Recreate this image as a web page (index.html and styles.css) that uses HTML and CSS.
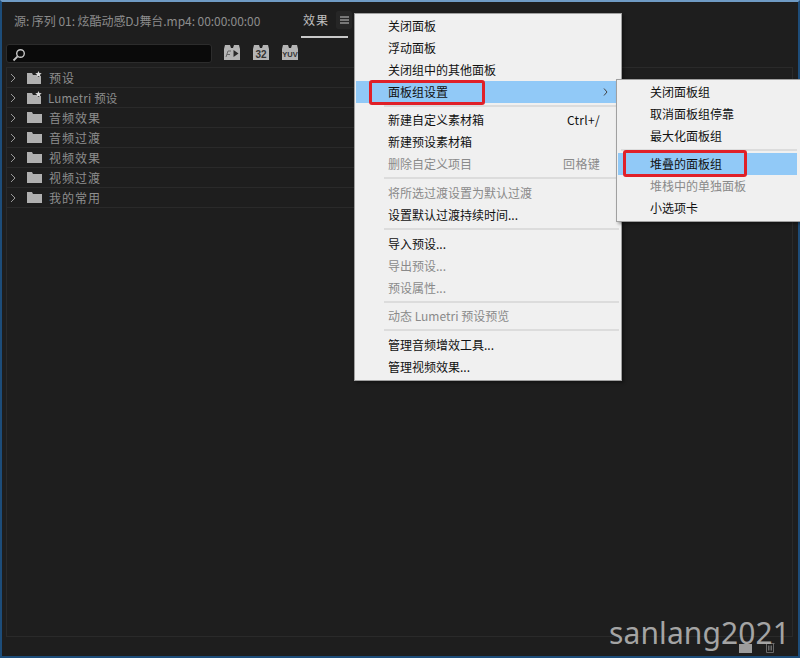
FILE: index.html
```html
<!DOCTYPE html>
<html lang="zh-CN">
<head>
  <meta charset="UTF-8">
  <title>效果面板菜单</title>
  <link rel="stylesheet" href="styles.css">
</head>
<body>
  <div class="window">
    <!-- 顶部标题 -->
    <div class="header">
      <span class="source-title">源: 序列 01: 炫酷动感DJ舞台.mp4: 00:00:00:00</span>
      <span class="tab">效果</span>
      <span class="tab-menu">
        <svg width="9" height="8" viewBox="0 0 9 8"><path d="M0 1h9M0 4h9M0 7h9" stroke="#c8c8c8" stroke-width="1"/></svg>
      </span>
    </div>

    <!-- 搜索栏 -->
    <div class="toolbar">
      <div class="search">
        <svg width="14" height="14" viewBox="0 0 14 14"><circle cx="8.500" cy="5.500" r="3.800" fill="none" stroke="#c4c4c4" stroke-width="1.400"/><path d="M5.600 8.400 1.500 12.500" stroke="#c4c4c4" stroke-width="1.800"/></svg>
      </div>
      <div class="filters">
        <svg width="16" height="15" viewBox="0 0 16 15"><path d="M0 4 1 0h5l1 3h2l1-3h5l1 4v11H0z" fill="#b4b4b4"/><path d="M9.500 5v7l5-3.500z" fill="#2a2a2a"/><path d="M2 12l2-6h3M3 9.500h3" fill="none" stroke="#666" stroke-width="1"/></svg>
        <svg width="16" height="15" viewBox="0 0 16 15"><path d="M0 4 1 0h5l1 3h2l1-3h5l1 4v11H0z" fill="#b4b4b4"/><text x="8" y="12.500" class="filter-num">32</text></svg>
        <svg width="16" height="15" viewBox="0 0 16 15"><path d="M0 4 1 0h5l1 3h2l1-3h5l1 4v11H0z" fill="#b4b4b4"/><text x="8" y="12" class="filter-yuv">YUV</text></svg>
      </div>
    </div>

    <!-- 效果列表 -->
    <div class="tree">
      <div class="tree-row">
        <svg class="chevron" width="6" height="10" viewBox="0 0 6 10"><path d="M1 1l4 4-4 4" fill="none" stroke="#9a9a9a" stroke-width="1"/></svg>
        <svg class="folder" width="15" height="13" viewBox="0 0 15 13"><path d="M0 2h5l1 2h3.500l1.500 2 3-1v8H0z" fill="#b0b0b0"/><path d="M11.500 0l.9 2.100 2.300.2-1.700 1.500.5 2.300-2-1.200-2 1.200.5-2.300-1.700-1.500 2.300-.2z" fill="#d8d8d8"/></svg>
        <span>预设</span>
      </div>
      <div class="tree-row">
        <svg class="chevron" width="6" height="10" viewBox="0 0 6 10"><path d="M1 1l4 4-4 4" fill="none" stroke="#9a9a9a" stroke-width="1"/></svg>
        <svg class="folder" width="15" height="13" viewBox="0 0 15 13"><path d="M0 2h5l1 2h3.500l1.500 2 3-1v8H0z" fill="#b0b0b0"/><path d="M11.500 0l.9 2.100 2.300.2-1.700 1.500.5 2.300-2-1.200-2 1.200.5-2.300-1.700-1.500 2.300-.2z" fill="#d8d8d8"/></svg>
        <span class="row-tight">Lumetri 预设</span>
      </div>
      <div class="tree-row">
        <svg class="chevron" width="6" height="10" viewBox="0 0 6 10"><path d="M1 1l4 4-4 4" fill="none" stroke="#9a9a9a" stroke-width="1"/></svg>
        <svg class="folder" width="15" height="13" viewBox="0 0 15 13"><path d="M0 1h5l1 2h9v9H0z" fill="#b0b0b0"/></svg>
        <span>音频效果</span>
      </div>
      <div class="tree-row">
        <svg class="chevron" width="6" height="10" viewBox="0 0 6 10"><path d="M1 1l4 4-4 4" fill="none" stroke="#9a9a9a" stroke-width="1"/></svg>
        <svg class="folder" width="15" height="13" viewBox="0 0 15 13"><path d="M0 1h5l1 2h9v9H0z" fill="#b0b0b0"/></svg>
        <span>音频过渡</span>
      </div>
      <div class="tree-row">
        <svg class="chevron" width="6" height="10" viewBox="0 0 6 10"><path d="M1 1l4 4-4 4" fill="none" stroke="#9a9a9a" stroke-width="1"/></svg>
        <svg class="folder" width="15" height="13" viewBox="0 0 15 13"><path d="M0 1h5l1 2h9v9H0z" fill="#b0b0b0"/></svg>
        <span>视频效果</span>
      </div>
      <div class="tree-row">
        <svg class="chevron" width="6" height="10" viewBox="0 0 6 10"><path d="M1 1l4 4-4 4" fill="none" stroke="#9a9a9a" stroke-width="1"/></svg>
        <svg class="folder" width="15" height="13" viewBox="0 0 15 13"><path d="M0 1h5l1 2h9v9H0z" fill="#b0b0b0"/></svg>
        <span>视频过渡</span>
      </div>
      <div class="tree-row">
        <svg class="chevron" width="6" height="10" viewBox="0 0 6 10"><path d="M1 1l4 4-4 4" fill="none" stroke="#9a9a9a" stroke-width="1"/></svg>
        <svg class="folder" width="15" height="13" viewBox="0 0 15 13"><path d="M0 1h5l1 2h9v9H0z" fill="#b0b0b0"/></svg>
        <span>我的常用</span>
      </div>
    </div>

    <!-- 底部按钮 -->
    <div class="footer">
      <span class="footer-new"></span>
      <svg width="10" height="11" viewBox="0 0 10 11"><path d="M.5 1.500h9M1.500 1.500v9h7v-9M3.500 3.500v5M5 3.500v5M6.500 3.500v5" fill="none" stroke="#6a6a6a" stroke-width="1"/></svg>
    </div>
  </div>

  <!-- 右键菜单 -->
  <div class="menu">
    <div class="menu-item">关闭面板</div>
    <div class="menu-item">浮动面板</div>
    <div class="menu-item">关闭组中的其他面板</div>
    <div class="menu-item active">面板组设置
      <svg class="arrow" width="5" height="8" viewBox="0 0 5 8"><path d="M1 .5l3 3.500-3 3.500" fill="none" stroke="#444" stroke-width="1"/></svg>
      <span class="mark mark-main"></span>
    </div>
    <div class="menu-sep menu-sep-narrow"></div>
    <div class="menu-item">新建自定义素材箱<span class="shortcut">Ctrl+/</span></div>
    <div class="menu-item">新建预设素材箱</div>
    <div class="menu-item disabled">删除自定义项目<span class="shortcut">回格键</span></div>
    <div class="menu-sep"></div>
    <div class="menu-item disabled">将所选过渡设置为默认过渡</div>
    <div class="menu-item">设置默认过渡持续时间...</div>
    <div class="menu-sep"></div>
    <div class="menu-item">导入预设...</div>
    <div class="menu-item disabled">导出预设...</div>
    <div class="menu-item disabled">预设属性...</div>
    <div class="menu-sep menu-sep-narrow"></div>
    <div class="menu-item disabled">动态 Lumetri 预设预览</div>
    <div class="menu-sep"></div>
    <div class="menu-item">管理音频增效工具...</div>
    <div class="menu-item">管理视频效果...</div>
  </div>

  <!-- 子菜单 -->
  <div class="menu submenu">
    <div class="menu-item">关闭面板组</div>
    <div class="menu-item">取消面板组停靠</div>
    <div class="menu-item">最大化面板组</div>
    <div class="menu-sep menu-sep-narrow"></div>
    <div class="menu-item active">堆叠的面板组
      <span class="mark mark-sub"></span>
    </div>
    <div class="menu-item disabled">堆栈中的单独面板</div>
    <div class="menu-item">小选项卡</div>
  </div>

  <div class="watermark">sanlang2021</div>
</body>
</html>
```

FILE: styles.css
```css
* { box-sizing: border-box; }
html, body {
  margin: 0;
  padding: 0;
  height: 658px;
  overflow: hidden;
}
body {
  position: relative;
  background-color: #1e1e1e;
  color: #a0a0a0;
  font-family: "Noto Sans CJK SC", "Liberation Sans", sans-serif;
  font-size: 12px;
}
.window {
  height: 658px;
  display: flex;
  flex-direction: column;
  border-top: 2px solid #6f9bc4;
  border-left: 2px solid #1d4d7a;
  border-right: 2px solid #1d4d7a;
  border-bottom: 2px solid #1d4d7a;
}

/* 顶部标题 */
.header {
  height: 36px;
  display: flex;
  align-items: flex-start;
  padding: 11px 0 0 12px;
  line-height: 16px;
}
.source-title {
  width: 287px;
  color: #8c8c8c;
  font-size: 12px;
  letter-spacing: -0.05px;
  white-space: nowrap;
}
.tab {
  width: 47px;
  height: 27px;
  margin-top: -2px;
  padding: 1px 0 0 2px;
  color: #c0c0c0;
  font-size: 12px;
  letter-spacing: 1px;
  line-height: 16px;
  border-bottom: 2px solid #c8c8c8;
}
.tab-menu {
  width: 16px;
  height: 18px;
  margin: -2px 0 0 -12px;
  display: flex;
  align-items: center;
  justify-content: center;
  background-color: #262626;
  border-radius: 2px;
}

/* 搜索栏 */
.toolbar {
  height: 29px;
  display: flex;
  align-items: flex-start;
  padding: 6px 0 0 4px;
}
.search {
  width: 206px;
  height: 19px;
  padding: 3px 0 0 5px;
  background-color: #0a0a0a;
  border: 1px solid #2c2c2c;
  border-radius: 3px;
}
.search svg { display: block; }
.filters {
  display: flex;
  gap: 13px;
  margin: 1px 0 0 12px;
}
.filter-num {
  fill: #333;
  font-family: "Liberation Sans", sans-serif;
  font-size: 10px;
  font-weight: 700;
  text-anchor: middle;
}
.filter-yuv {
  fill: #333;
  font-family: "Liberation Sans", sans-serif;
  font-size: 7.500px;
  font-weight: 700;
  text-anchor: middle;
}

/* 效果列表 */
.tree {
  flex: 1;
  margin: 0 5px 0 4px;
  border: 1px solid #2a2a2a;
  display: flex;
  flex-direction: column;
}
.tree-row {
  height: 20px;
  flex: none;
  display: flex;
  align-items: center;
  border-bottom: 1px solid #2a2a2a;
  color: #8e8e8e;
  font-size: 12px;
  line-height: 16px;
  letter-spacing: 1px;
  white-space: nowrap;
}
.chevron { margin-left: 3px; }
.folder { margin-left: 11px; margin-right: 7px; }
.row-tight { margin-left: -1px; font-size: 11.500px; letter-spacing: 0.2px; }

/* 底部按钮 */
.footer {
  height: 19px;
  display: flex;
  align-items: flex-end;
  justify-content: flex-end;
  gap: 13px;
  padding: 0 23px 3px 0;
}
.footer-new {
  width: 13px;
  height: 9px;
  background-color: #9c9c9c;
}

/* 菜单 */
.menu {
  position: absolute;
  left: 354px;
  top: 13px;
  width: 268px;
  height: 368px;
  padding: 1px 2px 1px 1px;
  background-color: #f0f0f0;
  border: 1px solid #a0a0a0;
  box-shadow: 2px 2px 3px rgba(0,0,0,0.35);
  color: #111;
}
.menu-item {
  position: relative;
  height: 22px;
  padding-left: 32px;
  font-size: 12px;
  line-height: 22px;
  white-space: nowrap;
}
.menu-item.active { background-color: #91c9f7; }
.menu-item.disabled { color: #8a8a8a; }
.menu-sep {
  height: 7px;
  margin-left: 28px;
  padding-top: 2px;
}
.menu-sep-narrow { height: 6px; }
.menu-sep::before {
  content: "";
  display: block;
  height: 2px;
  background-color: #dcdcdc;
}
.shortcut {
  position: absolute;
  right: 19px;
  top: 0;
  letter-spacing: 0.3px;
}
.arrow {
  position: absolute;
  right: 11px;
  top: 7px;
}
.mark {
  position: absolute;
  border: 3px solid #e02028;
  border-radius: 3px;
}
.mark-main {
  left: 13px;
  top: -1px;
  width: 116px;
  height: 25px;
}
.submenu {
  left: 616px;
  top: 79px;
  width: 190px;
  height: 143px;
  padding-right: 8px;
  z-index: 2;
}
.submenu .menu-sep { margin-left: 3px; }
.mark-sub {
  left: 5px;
  top: -3px;
  width: 124px;
  height: 27px;
}
.watermark {
  position: absolute;
  left: 609px;
  top: 613px;
  color: #b0b0b0;
  opacity: 0.92;
  font-family: "Noto Sans", sans-serif;
  font-size: 30px;
  line-height: 40px;
  letter-spacing: 0.1px;
  white-space: nowrap;
  z-index: 3;
}
```
